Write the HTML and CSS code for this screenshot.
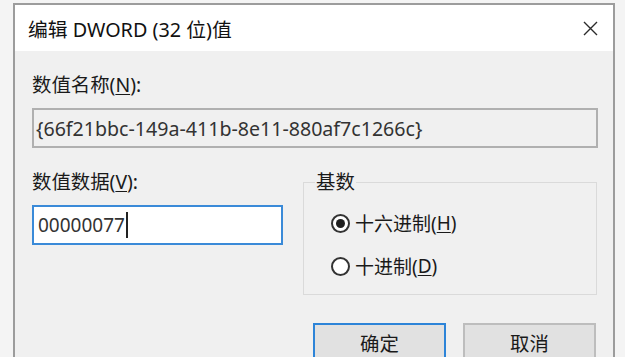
FILE: index.html
```html
<!DOCTYPE html>
<html lang="zh-CN">
<head>
<meta charset="utf-8">
<title>编辑 DWORD (32 位)值</title>
<link rel="stylesheet" href="styles.css">
</head>
<body>
<div class="window">
  <div class="titlebar">
    <span class="title">编辑 DWORD (32 位)值</span>
    <svg class="close" width="15" height="15" viewBox="0 0 15 15" aria-label="关闭">
      <path d="M1 1 L14 14 M14 1 L1 14" stroke="#2b2b2b" stroke-width="1.4" fill="none"/>
    </svg>
  </div>
  <div class="content">
    <div class="label">数值名称(<u>N</u>):</div>
    <div class="field readonly">{66f21bbc-149a-411b-8e11-880af7c1266c}</div>
    <div class="row">
      <div class="col">
        <div class="label">数值数据(<u>V</u>):</div>
        <div class="field focused">00000077<span class="caret"></span></div>
      </div>
      <fieldset class="group">
        <legend>基数</legend>
        <div class="radio-row"><span class="radio checked"></span>十六进制(<u>H</u>)</div>
        <div class="radio-row"><span class="radio"></span>十进制(<u>D</u>)</div>
      </fieldset>
    </div>
    <div class="buttons">
      <button class="btn default">确定</button>
      <button class="btn">取消</button>
    </div>
  </div>
</div>
</body>
</html>
```

FILE: styles.css
```css
html, body {
  margin: 0;
  height: 357px;
  overflow: hidden;
}
body {
  background: #f4f4f4;
  font-family: "Noto Sans", "Noto Sans CJK SC", sans-serif;
  color: #1a1a1a;
}
u {
  text-decoration: underline;
  text-decoration-thickness: 1px;
  text-underline-offset: 2px;
}
.window {
  box-sizing: border-box;
  margin: 3px 0 0 13px;
  width: 602px;
  height: 354px;
  border: 2px solid #9c9c9c;
  border-bottom: none;
  background: #f0f0f0;
}
.titlebar {
  height: 46px;
  background: #ffffff;
  display: flex;
  align-items: center;
  justify-content: space-between;
  padding: 0 15px 0 13px;
}
.title {
  font-size: 19.8px;
  color: #111;
}
.close {
  display: block;
}
.content {
  padding: 23px 14px 0 17px;
}
.label {
  font-size: 19.4px;
  line-height: 22px;
  margin-bottom: 12px;
  color: #1a1a1a;
}
.field {
  box-sizing: border-box;
  height: 40px;
  display: flex;
  align-items: center;
  font-size: 19px;
}
.readonly {
  width: 566px;
  border: 2px solid #b0b0b0;
  background: #f0f0f0;
  padding-left: 2px;
  color: #333;
  font-size: 19.6px;
}
.focused {
  width: 251px;
  border: 2px solid #3a8ad8;
  background: #ffffff;
  padding-left: 4px;
  color: #333;
}
.caret {
  display: inline-block;
  width: 0;
  height: 26px;
  border-left: 2px solid #222;
  margin-left: 1px;
}
.row {
  display: flex;
  align-items: flex-start;
  margin-top: 23px;
}
.col {
  width: 251px;
}
.group {
  box-sizing: border-box;
  margin: 0 0 0 20px;
  width: 294px;
  border: 1px solid #dadada;
  padding: 0 0 15px 11px;
  min-width: 0;
}
.group legend {
  font-size: 19.4px;
  line-height: 22px;
  padding: 0 1px;
  color: #1a1a1a;
}
.radio-row {
  display: flex;
  align-items: center;
  height: 26px;
  margin: 17px 0 0 16px;
  font-size: 19px;
}
.radio {
  box-sizing: border-box;
  width: 19px;
  height: 19px;
  border: 2px solid #333;
  border-radius: 50%;
  background: #fff;
  margin-right: 5px;
  display: flex;
  align-items: center;
  justify-content: center;
}
.radio.checked::after {
  content: "";
  width: 9px;
  height: 9px;
  border-radius: 50%;
  background: #1f1f1f;
}
.buttons {
  display: flex;
  gap: 17px;
  margin: 28px 0 0 281px;
}
.btn {
  box-sizing: border-box;
  width: 133px;
  height: 34px;
  background: #e1e1e1;
  border: 2px solid #bdbdbd;
  border-bottom: none;
  font-family: "Noto Sans", "Noto Sans CJK SC", sans-serif;
  font-size: 19.4px;
  line-height: 24px;
  color: #1a1a1a;
  padding: 7px 0 0;
  display: flex;
  align-items: flex-start;
  justify-content: center;
}
.btn.default {
  border-color: #2d84d8;
}
```
